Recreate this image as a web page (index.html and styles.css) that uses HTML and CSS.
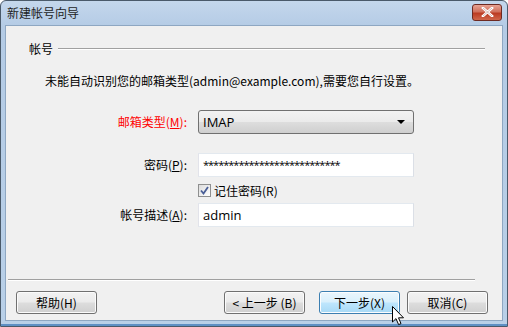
FILE: index.html
```html
<!DOCTYPE html>
<html lang="zh-CN">
<head>
    <meta charset="UTF-8">
    <title>新建帐号向导</title>
    <link rel="stylesheet" href="styles.css">
</head>
<body>

    <div class="window">
        <div class="titlebar">
            <span class="title">新建帐号向导</span>
            <button class="close-btn">
                <svg width="13" height="10" viewBox="0 0 13 10">
                    <path d="M2 1 L11 9 M11 1 L2 9" stroke="#fff" stroke-width="2.6" stroke-linecap="square"/>
                    <path d="M2 1 L11 9 M11 1 L2 9" stroke="#6b1f14" stroke-width="0.6" opacity="0.5"/>
                </svg>
            </button>
        </div>

        <div class="frame">
            <div class="content">
                <div class="group-head">
                    <span class="group-title">帐号</span>
                    <span class="group-line"></span>
                </div>

                <p class="message">未能自动识别您的邮箱类型(admin@example.com),需要您自行设置。</p>

                <div class="form">
                    <label class="form-label required">邮箱类型(<u>M</u>):</label>
                    <div class="select">
                        <span>IMAP</span>
                        <span class="select-arrow"></span>
                    </div>

                    <label class="form-label pass-label">密码(<u>P</u>):</label>
                    <div class="text-input pass-input">***************************</div>

                    <span></span>
                    <label class="check-row">
                        <span class="checkbox">
                            <svg width="9" height="9" viewBox="0 0 9 9">
                                <path d="M1 4.5 L3.5 7.5 L8 1" fill="none" stroke="#4a5f97" stroke-width="1.8"/>
                            </svg>
                        </span>
                        记住密码(R)
                    </label>

                    <label class="form-label">帐号描述(<u>A</u>):</label>
                    <div class="text-input">admin</div>
                </div>

                <div class="spacer"></div>

                <div class="separator"></div>

                <div class="button-row">
                    <button class="btn">帮助(H)</button>
                    <div class="button-group">
                        <button class="btn">&lt; 上一步 (B)</button>
                        <button class="btn btn-hot">下一步(X)</button>
                        <button class="btn">取消(C)</button>
                    </div>
                </div>
            </div>
        </div>

        <svg class="cursor" width="13" height="20" viewBox="0 0 13 20">
            <path d="M0.5 0.5 L0.5 16 L4 12.6 L6.6 18.6 L9 17.6 L6.5 11.8 L11.5 11.8 Z" fill="#fff" stroke="#000" stroke-width="1"/>
        </svg>
    </div>

</body>
</html>
```

FILE: styles.css
```css
* {
    margin: 0;
    padding: 0;
    box-sizing: border-box;
}

body {
    font-family: "Noto Sans CJK SC", "Noto Sans", sans-serif;
    font-size: 12px;
    color: #000;
    background-color: #ffffff;
    width: 508px;
    height: 327px;
    overflow: hidden;
}

.window {
    position: relative;
    width: 508px;
    height: 327px;
    border: 1px solid #4a5a6a;
    border-radius: 6px 6px 0 0;
    background: linear-gradient(to bottom, #c4d7ec, #b4cbe5 26px, #b9d0e8);
    display: flex;
    flex-direction: column;
    overflow: hidden;
}

.titlebar {
    height: 24px;
    display: flex;
    align-items: center;
    justify-content: space-between;
    padding: 0 5px 0 6px;
}

.title {
    font-size: 12px;
    color: #1e1e1e;
    line-height: 1;
}

.close-btn {
    width: 30px;
    height: 17px;
    border: 1px solid #6d2a22;
    border-radius: 3px;
    background: linear-gradient(to bottom, #e8a393, #d0705c 45%, #bb3b22 55%, #d0664a);
    display: flex;
    align-items: center;
    justify-content: center;
    margin-top: -2px;
}

.frame {
    flex: 1;
    padding: 0 4px 3px 4px;
    display: flex;
    border-bottom: 2px solid #5e90c4;
}

.content {
    flex: 1;
    background-color: #f0f0f0;
    border: 1px solid #8ea7c2;
    display: flex;
    flex-direction: column;
}

.group-head {
    display: flex;
    align-items: center;
    margin: 12px 17px 0 23px;
    height: 20px;
}

.group-title {
    padding-right: 5px;
}

.group-line {
    flex: 1;
    border-top: 1px solid #a0a0a0;
    border-bottom: 1px solid #ffffff;
    margin-top: 1px;
}

.message {
    margin: 15px 0 0 39px;
    line-height: 16px;
}

.form {
    display: grid;
    grid-template-columns: 181px 216px;
    column-gap: 11px;
    align-items: center;
    margin-top: 21px;
}

.form-label {
    text-align: right;
    line-height: 24px;
}

.required {
    color: #ff0000;
}

.pass-label,
.pass-input {
    margin-top: 19px;
}

.select {
    height: 24px;
    border: 1px solid #707070;
    border-radius: 3px;
    background: linear-gradient(to bottom, #f2f2f2, #ebebeb 48%, #dddddd 52%, #cfcfcf);
    display: flex;
    align-items: center;
    justify-content: space-between;
    padding: 0 8px 0 4px;
    font-size: 13px;
    font-family: "Open Sans", sans-serif;
}

.select-arrow {
    width: 0;
    height: 0;
    border-left: 4px solid transparent;
    border-right: 4px solid transparent;
    border-top: 4px solid #000;
}

.text-input {
    height: 24px;
    background-color: #ffffff;
    border: 1px solid #abadb3;
    border-top-color: #e3e9ef;
    border-left-color: #e2e3ea;
    border-right-color: #dbdfe6;
    border-bottom-color: #e3e9ef;
    padding: 0 4px;
    line-height: 22px;
    font-family: "Open Sans", sans-serif;
    font-size: 13px;
}

.pass-input {
    font-size: 11px;
    letter-spacing: -1px;
}

.check-row {
    display: flex;
    align-items: center;
    gap: 3px;
    height: 26px;
}

.checkbox {
    width: 13px;
    height: 13px;
    border: 1px solid #8e8f8f;
    background: linear-gradient(135deg, #dcdcdc, #ffffff);
    display: flex;
    align-items: center;
    justify-content: center;
}

.spacer {
    flex: 1;
}

.separator {
    align-self: flex-start;
    width: 467px;
    margin-left: 2px;
    border-top: 1px solid #a0a0a0;
    border-bottom: 1px solid #ffffff;
}

.button-row {
    display: flex;
    justify-content: space-between;
    padding: 10px 14px 6px 10px;
}

.button-group {
    display: flex;
    gap: 7px;
}

.button-group .btn:first-child {
    margin-right: 7px;
}

.btn {
    width: 81px;
    height: 23px;
    border: 1px solid #707070;
    border-radius: 3px;
    background: linear-gradient(to bottom, #f2f2f2, #ebebeb 48%, #dddddd 52%, #cfcfcf);
    font-family: "Noto Sans CJK SC", "Noto Sans", sans-serif;
    font-size: 12px;
    color: #000;
    box-shadow: inset 0 0 0 1px #fbfbfb;
}

.btn-hot {
    border-color: #3c7fb1;
    background: linear-gradient(to bottom, #eaf6fd, #d9f0fc 48%, #bee6fd 52%, #a7d9f5);
    box-shadow: inset 0 0 0 1px #fcfdfe;
}

.cursor {
    position: absolute;
    left: 391px;
    top: 305px;
}
```
